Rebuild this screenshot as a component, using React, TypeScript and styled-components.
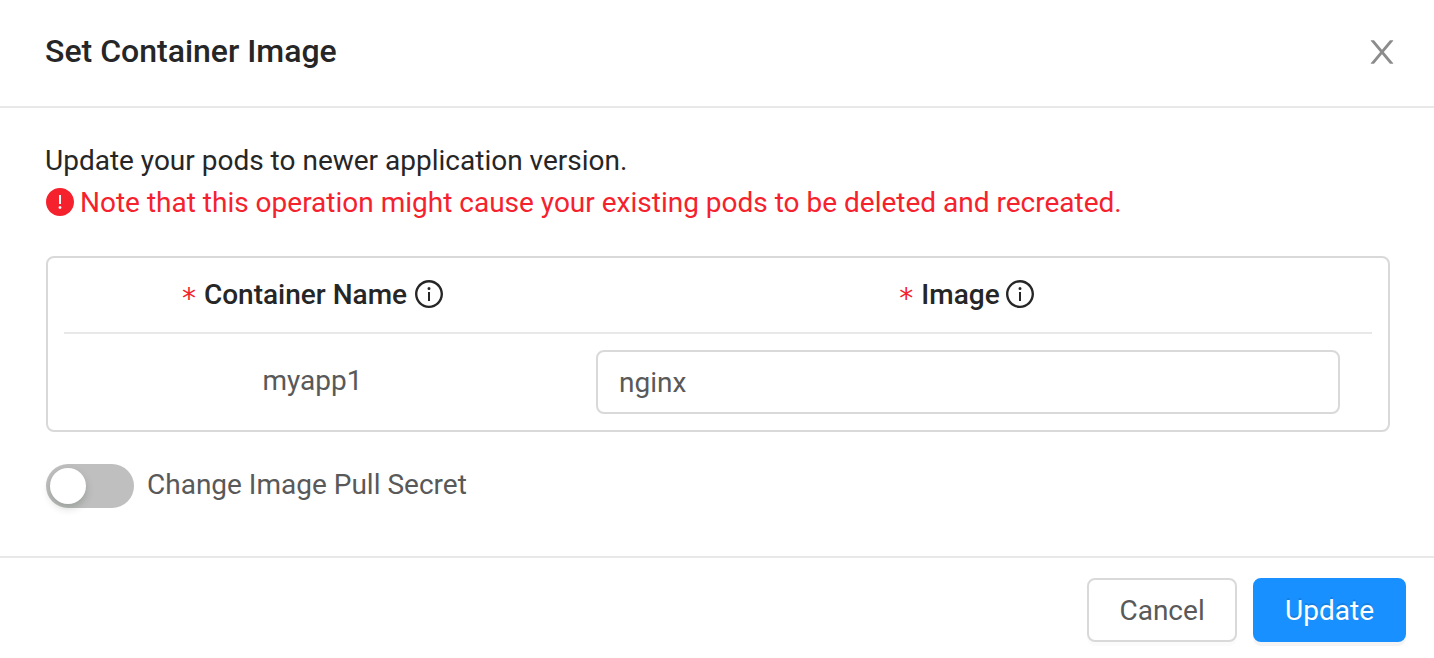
import React, { useState } from 'react';
import styled, { createGlobalStyle } from 'styled-components';

const GlobalStyle = createGlobalStyle`
  *, *::before, *::after { box-sizing: border-box; }
  body {
    margin: 0;
    background: #fff;
    color: #595959;
    font-family: Roboto, "Liberation Sans", sans-serif;
    font-size: 28px;
    line-height: 42px;
  }
  button, input { font: inherit; color: inherit; }
`;

const Dialog = styled.main`
  width: 100%;
`;

const Header = styled.header`
  display: flex;
  align-items: center;
  justify-content: space-between;
  padding: 29px 36px 31px 45px;
  border-bottom: 2px solid #e8e8e8;
`;

const Title = styled.h1`
  margin: 0;
  padding-bottom: 2px;
  color: #262626;
  font-size: 32px;
  font-weight: 500;
  line-height: 44px;
`;

const CloseButton = styled.button`
  display: flex;
  padding: 0;
  border: 0;
  background: none;
  color: #8c8c8c;
  cursor: pointer;
`;

const Body = styled.section`
  padding: 32px 44px 48px 45px;
`;

const Description = styled.p`
  margin: 0;
  color: #262626;
`;

const Warning = styled.p`
  display: flex;
  align-items: center;
  gap: 6px;
  margin: 0;
  padding-left: 1px;
  color: #f5222d;
`;

const TableFrame = styled.div`
  margin: 32px 0 32px 1px;
  padding: 0 16px;
  border: 2px solid #d9d9d9;
  border-radius: 8px;
`;

const Table = styled.table`
  width: 100%;
  border-collapse: separate;
  border-spacing: 0;
  table-layout: fixed;
`;

const HeadCell = styled.th<{ $width?: string }>`
  width: ${({ $width }) => $width ?? 'auto'};
  height: 76px;
  padding: 0;
  border-bottom: 2px solid #e8e8e8;
  color: #262626;
  font-weight: 500;
`;

const HeadLabel = styled.span<{ $gap: number }>`
  display: flex;
  align-items: center;
  justify-content: center;
  gap: ${({ $gap }) => $gap}px;
`;

const Required = styled.span`
  margin-right: 8px;
  color: #f5222d;
  font-family: "DejaVu Sans", sans-serif;
  font-weight: 400;
  line-height: 28px;
  vertical-align: -4px;
`;

const NameCell = styled.td`
  padding: 0 0 2px;
  text-align: center;
`;

const ImageCell = styled.td`
  padding: 16px 32px 16px 35px;
`;

const TextInput = styled.input`
  display: block;
  width: 100%;
  height: 64px;
  padding: 0 21px;
  border: 2px solid #d9d9d9;
  border-radius: 8px;
  background: #fff;
  outline: none;
`;

const SwitchRow = styled.label`
  display: flex;
  align-items: center;
  gap: 13px;
  padding-left: 1px;
  cursor: pointer;
`;

const SwitchText = styled.span`
  padding-bottom: 2px;
`;

const Switch = styled.input`
  appearance: none;
  width: 88px;
  height: 44px;
  margin: 0;
  padding: 4px;
  border-radius: 22px;
  background: #bfbfbf;
  cursor: pointer;

  &::before {
    content: "";
    display: block;
    width: 36px;
    height: 36px;
    border-radius: 50%;
    background: #fff;
    box-shadow: 0 4px 8px rgba(0, 35, 11, 0.2);
  }

  &:checked { background: #1890ff; }
  &:checked::before { margin-left: auto; }
`;

const Footer = styled.footer`
  display: flex;
  justify-content: flex-end;
  gap: 16px;
  padding: 20px 28px 16px;
  border-top: 2px solid #e8e8e8;
`;

const Button = styled.button<{ $primary?: boolean }>`
  height: 64px;
  min-width: 150px;
  padding: 2px 30px 0;
  border: 2px solid ${({ $primary }) => ($primary ? '#1890ff' : '#d9d9d9')};
  border-radius: 8px;
  background: ${({ $primary }) => ($primary ? '#1890ff' : '#fff')};
  color: ${({ $primary }) => ($primary ? '#fff' : '#595959')};
  text-shadow: ${({ $primary }) => ($primary ? '0 -2px 0 rgba(0, 0, 0, 0.12)' : 'none')};
  box-shadow: 0 4px 0 ${({ $primary }) => ($primary ? 'rgba(0, 0, 0, 0.045)' : 'rgba(0, 0, 0, 0.016)')};
  cursor: pointer;
`;

const Glyph = styled.svg`
  flex: none;
  display: block;
  fill: currentColor;
`;

const TextGlyph = styled(Glyph)`
  margin-bottom: 2px;
`;

const CloseIcon = () => (
  <Glyph width="32" height="32" viewBox="64 64 896 896" aria-hidden="true">
    <path d="M563.8 512l262.5-312.9c4.4-5.2.7-13.1-6.1-13.1h-79.8c-4.7 0-9.2 2.1-12.3 5.7L511.6 449.8 295.1 191.7c-3-3.6-7.5-5.7-12.3-5.7H203c-6.8 0-10.5 7.9-6.1 13.1L459.4 512 196.9 824.9A7.95 7.95 0 0 0 203 838h79.8c4.7 0 9.2-2.1 12.3-5.7l216.5-258.1 216.5 258.1c3 3.6 7.5 5.7 12.3 5.7h79.8c6.8 0 10.5-7.9 6.1-13.1L563.8 512z" />
  </Glyph>
);

const InfoIcon = () => (
  <TextGlyph width="28" height="28" viewBox="64 64 896 896" aria-hidden="true">
    <path d="M512 64C264.6 64 64 264.6 64 512s200.6 448 448 448 448-200.6 448-448S759.4 64 512 64zm0 820c-205.4 0-372-166.6-372-372s166.6-372 372-372 372 166.6 372 372-166.6 372-372 372z" />
    <path d="M464 336a48 48 0 1 0 96 0 48 48 0 1 0-96 0zm72 112h-48c-4.4 0-8 3.6-8 8v272c0 4.4 3.6 8 8 8h48c4.4 0 8-3.6 8-8V456c0-4.4-3.6-8-8-8z" />
  </TextGlyph>
);

const WarningIcon = () => (
  <TextGlyph width="28" height="28" viewBox="64 64 896 896" aria-hidden="true">
    <path d="M512 64C264.6 64 64 264.6 64 512s200.6 448 448 448 448-200.6 448-448S759.4 64 512 64zm-32 232c0-4.4 3.6-8 8-8h48c4.4 0 8 3.6 8 8v272c0 4.4-3.6 8-8 8h-48c-4.4 0-8-3.6-8-8V296zm32 440a48.01 48.01 0 0 1 0-96 48.01 48.01 0 0 1 0 96z" />
  </TextGlyph>
);

export default function App() {
  const [image, setImage] = useState('nginx');
  const [changeSecret, setChangeSecret] = useState(false);

  return (
    <>
      <GlobalStyle />
      <Dialog>
        <Header>
          <Title>Set Container Image</Title>
          <CloseButton type="button" aria-label="Close">
            <CloseIcon />
          </CloseButton>
        </Header>
        <Body>
          <Description>Update your pods to newer application version.</Description>
          <Warning>
            <WarningIcon />
            Note that this operation might cause your existing pods to be deleted and recreated.
          </Warning>
          <TableFrame>
            <Table>
              <thead>
                <tr>
                  <HeadCell scope="col" $width="38%">
                    <HeadLabel $gap={8}>
                      <span><Required>*</Required>Container Name</span>
                      <InfoIcon />
                    </HeadLabel>
                  </HeadCell>
                  <HeadCell scope="col">
                    <HeadLabel $gap={6}>
                      <label htmlFor="image"><Required>*</Required>Image</label>
                      <InfoIcon />
                    </HeadLabel>
                  </HeadCell>
                </tr>
              </thead>
              <tbody>
                <tr>
                  <NameCell>myapp1</NameCell>
                  <ImageCell>
                    <TextInput
                      id="image"
                      type="text"
                      value={image}
                      onChange={(event) => setImage(event.target.value)}
                    />
                  </ImageCell>
                </tr>
              </tbody>
            </Table>
          </TableFrame>
          <SwitchRow>
            <Switch
              type="checkbox"
              role="switch"
              checked={changeSecret}
              onChange={(event) => setChangeSecret(event.target.checked)}
            />
            <SwitchText>Change Image Pull Secret</SwitchText>
          </SwitchRow>
        </Body>
        <Footer>
          <Button type="button">Cancel</Button>
          <Button type="button" $primary>Update</Button>
        </Footer>
      </Dialog>
    </>
  );
}
